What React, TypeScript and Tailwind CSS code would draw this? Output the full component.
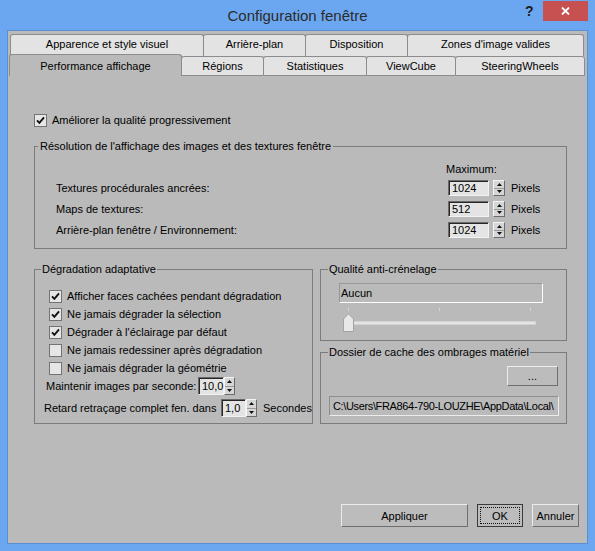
import React from "react";

function Check({ checked }: { checked: boolean }) {
  return (
    <span className="w-[13px] h-[13px] shrink-0 border border-[#737373] bg-[#e6e6e6] flex items-center justify-center">
      {checked && (
        <svg width="9" height="9" viewBox="0 0 9 9">
          <path d="M1 4.3 L3.4 6.8 L8 1.4" stroke="#111" strokeWidth="1.9" fill="none" />
        </svg>
      )}
    </span>
  );
}

function Spin({ className }: { className: string }) {
  return (
    <div
      className={
        "shrink-0 flex flex-col border border-t-[#f4f4f4] border-l-[#f4f4f4] border-b-[#6b6b6b] border-r-[#6b6b6b] bg-[#d6d6d6] " +
        className
      }
    >
      <div className="flex-1 flex items-center justify-center border-b border-b-[#9a9a9a]">
        <svg width="5" height="3" viewBox="0 0 5 3">
          <path d="M0 3 L2.5 0 L5 3 Z" fill="#111" />
        </svg>
      </div>
      <div className="flex-1 flex items-center justify-center">
        <svg width="5" height="3" viewBox="0 0 5 3">
          <path d="M0 0 L5 0 L2.5 3 Z" fill="#111" />
        </svg>
      </div>
    </div>
  );
}

function Field({ value, className }: { value: string; className: string }) {
  return (
    <div
      className={
        "shrink-0 bg-[#e4e4e4] border border-t-[#6a6a6a] border-l-[#6a6a6a] border-b-[#f2f2f2] border-r-[#f2f2f2] shadow-[inset_1px_1px_0_#262626] pl-[3px] flex items-center leading-none " +
        className
      }
    >
      {value}
    </div>
  );
}

function CheckRow({ checked, label }: { checked: boolean; label: string }) {
  return (
    <div className="h-[18px] flex items-center gap-[5px] pl-[14px]">
      <Check checked={checked} />
      <span>{label}</span>
    </div>
  );
}

export default function App() {
  return (
    <div className="w-[595px] h-[551px] bg-[#6ba7f0] flex flex-col font-['Liberation_Sans',Arial,sans-serif] text-[11px] leading-[14px] text-black overflow-hidden select-none">
      {/* Title bar */}
      <div className="relative h-[30px] shrink-0 flex items-center justify-center">
        <span className="text-[15px] leading-[18px] text-[#2b2b2b] mt-[2px]">Configuration fenêtre</span>
        <span className="absolute left-[525px] top-[3px] text-[14px] leading-[17px] font-bold text-[#1c1c1c]">?</span>
        <div className="absolute left-[543px] top-[1px] w-[45px] h-[20px] bg-[#c75050] flex items-center justify-center">
          <svg width="9" height="8" viewBox="0 0 9 8">
            <path d="M1 0.5 L8 7.5 M8 0.5 L1 7.5" stroke="#fff" strokeWidth="1.8" />
          </svg>
        </div>
      </div>

      {/* Client area */}
      <div className="mx-[7px] mb-[7px] flex-1 border border-[#5a8fd6] bg-[#bababa] flex flex-col">
        {/* Tabs row 1 */}
        <div className="pt-[3px] pl-[2px] flex h-[25px] shrink-0">
          <div className="w-[194px] h-[22px] border border-b-0 border-[#8c8c8c] bg-[#e3e3e3] rounded-t-[3px] flex justify-center pt-[2px]">
            Apparence et style visuel
          </div>
          <div className="-ml-px w-[103px] h-[22px] border border-b-0 border-[#8c8c8c] bg-[#e3e3e3] rounded-t-[3px] flex justify-center pt-[2px]">
            Arrière-plan
          </div>
          <div className="-ml-px w-[103px] h-[22px] border border-b-0 border-[#8c8c8c] bg-[#e3e3e3] rounded-t-[3px] flex justify-center pt-[2px]">
            Disposition
          </div>
          <div className="-ml-px w-[177px] h-[22px] border border-b-0 border-[#8c8c8c] bg-[#e3e3e3] rounded-t-[3px] flex justify-center pt-[2px]">
            Zones d'image valides
          </div>
        </div>
        {/* Tabs row 2 */}
        <div className="pl-[1px] flex h-[20px] shrink-0 items-end">
          <div className="relative z-10 -mt-[2px] w-[173px] h-[22px] border border-b-0 border-[#8c8c8c] bg-[#bababa] rounded-t-[3px] flex items-center justify-center">
            Performance affichage
          </div>
          <div className="-ml-px w-[83px] h-[20px] border border-[#8c8c8c] bg-[#e3e3e3] rounded-t-[3px] flex items-center justify-center">
            Régions
          </div>
          <div className="-ml-px w-[104px] h-[20px] border border-[#8c8c8c] bg-[#e3e3e3] rounded-t-[3px] flex items-center justify-center">
            Statistiques
          </div>
          <div className="-ml-px w-[90px] h-[20px] border border-[#8c8c8c] bg-[#e3e3e3] rounded-t-[3px] flex items-center justify-center">
            ViewCube
          </div>
          <div className="-ml-px w-[130px] h-[20px] border border-[#8c8c8c] bg-[#e3e3e3] rounded-t-[3px] flex items-center justify-center">
            SteeringWheels
          </div>
        </div>

        {/* Panel */}
        <div className="flex-1 flex flex-col">
          <div className="pl-[26px] pr-[20px] flex flex-col">
            <div className="mt-[37px] h-[14px] flex items-center gap-[5px]">
              <Check checked={true} />
              <span>Améliorer la qualité progressivement</span>
            </div>

            {/* Group 1 */}
            <fieldset className="mt-[12px] h-[110px] border border-[#7c7c7c]">
              <legend className="ml-[3px] px-[2px] leading-[14px]">
                Résolution de l'affichage des images et des textures fenêtre
              </legend>
              <div className="pl-[21px] flex flex-col">
                <div className="mt-[9px] h-[14px] pl-[390px]">Maximum:</div>
                <div className="mt-[4px] h-[16px] flex items-center">
                  <span className="w-[392px]">Textures procédurales ancrées:</span>
                  <Field value="1024" className="w-[41px] h-[16px]" />
                  <Spin className="ml-[4px] w-[12px] h-[16px]" />
                  <span className="ml-[6px]">Pixels</span>
                </div>
                <div className="mt-[5px] h-[16px] flex items-center">
                  <span className="w-[392px]">Maps de textures:</span>
                  <Field value="512" className="w-[41px] h-[16px]" />
                  <Spin className="ml-[4px] w-[12px] h-[16px]" />
                  <span className="ml-[6px]">Pixels</span>
                </div>
                <div className="mt-[5px] h-[16px] flex items-center">
                  <span className="w-[392px]">Arrière-plan fenêtre / Environnement:</span>
                  <Field value="1024" className="w-[41px] h-[16px]" />
                  <Spin className="ml-[4px] w-[12px] h-[16px]" />
                  <span className="ml-[6px]">Pixels</span>
                </div>
              </div>
            </fieldset>

            {/* Bottom groups */}
            <div className="mt-[13px] flex gap-[7px]">
              <fieldset className="w-[278px] h-[162px] shrink-0 border border-[#7c7c7c]">
                <legend className="ml-[6px] px-[1px] leading-[14px]">Dégradation adaptative</legend>
                <div className="mt-[11px] flex flex-col">
                  <CheckRow checked={true} label="Afficher faces cachées pendant dégradation" />
                  <CheckRow checked={true} label="Ne jamais dégrader la sélection" />
                  <CheckRow checked={true} label="Dégrader à l'éclairage par défaut" />
                  <CheckRow checked={false} label="Ne jamais redessiner après dégradation" />
                  <CheckRow checked={false} label="Ne jamais dégrader la géométrie" />
                  <div className="h-[18px] flex items-center pl-[11px]">
                    <span className="w-[152px] shrink-0 whitespace-nowrap">Maintenir images par seconde:</span>
                    <Field value="10,0" className="w-[26px] h-[18px] pl-[2px]" />
                    <Spin className="w-[11px] h-[18px]" />
                  </div>
                  <div className="mt-[4px] h-[18px] flex items-center pl-[9px]">
                    <span className="w-[177px] shrink-0 whitespace-nowrap">Retard retraçage complet fen. dans</span>
                    <Field value="1,0" className="w-[25px] h-[18px] pl-[2px]" />
                    <Spin className="w-[11px] h-[18px]" />
                    <span className="ml-[6px] whitespace-nowrap">Secondes</span>
                  </div>
                </div>
              </fieldset>

              <div className="w-[247px] shrink-0 flex flex-col">
                <fieldset className="h-[79px] border border-[#7c7c7c]">
                  <legend className="ml-[7px] px-[1px] leading-[14px]">Qualité anti-crénelage</legend>
                  <div className="flex flex-col">
                    <div className="mt-[7px] ml-[18px] w-[204px] h-[20px] border border-t-[#989898] border-l-[#989898] border-b-white border-r-white pl-[1px] flex items-center">
                      Aucun
                    </div>
                    <div className="relative mt-[5px] ml-[22px] w-[194px] h-[24px]">
                      <div className="absolute left-[5px] top-0 w-px h-[3px] bg-[#d6d6d6]" />
                      <div className="absolute left-[96px] top-0 w-px h-[3px] bg-[#d6d6d6]" />
                      <div className="absolute left-[187px] top-0 w-px h-[3px] bg-[#d6d6d6]" />
                      <div className="absolute left-[4px] right-[1px] top-[13px] h-[4px] bg-[#e4e4e4] border border-[#d2d2d2]" />
                      <svg className="absolute left-0 top-[5px]" width="11" height="19" viewBox="0 0 11 19">
                        <path d="M0.5 6 L5.5 0.7 L10.5 6 L10.5 18.5 L0.5 18.5 Z" fill="#e8e8e8" stroke="#a3a3a3" strokeWidth="1" />
                      </svg>
                    </div>
                  </div>
                </fieldset>
                <fieldset className="mt-[4px] h-[79px] border border-[#7c7c7c]">
                  <legend className="ml-[7px] px-[1px] leading-[14px]">Dossier de cache des ombrages matériel</legend>
                  <div className="flex flex-col">
                    <div className="mt-[7px] mr-[8px] self-end w-[51px] h-[20px] bg-[#bcbcbc] border border-t-[#ececec] border-l-[#ececec] border-b-[#6e6e6e] border-r-[#6e6e6e] flex items-center justify-center">
                      ...
                    </div>
                    <div className="mt-[10px] ml-[8px] w-[230px] h-[20px] border border-t-[#8e8e8e] border-l-[#8e8e8e] border-b-[#ececec] border-r-[#ececec] pl-[3px] flex items-center overflow-hidden whitespace-nowrap tracking-[-0.35px]">
                      C:\Users\FRA864-790-LOUZHE\AppData\Local\
                    </div>
                  </div>
                </fieldset>
              </div>
            </div>
          </div>

          {/* Buttons */}
          <div className="mt-auto pr-[8px] pb-[16px] flex justify-end gap-[9px]">
            <div className="w-[127px] h-[23px] bg-[#bcbcbc] border border-t-[#ececec] border-l-[#ececec] border-b-[#6e6e6e] border-r-[#6e6e6e] flex items-center justify-center">
              Appliquer
            </div>
            <div className="w-[46px] h-[23px] bg-[#bcbcbc] border border-[#3a3a3a] p-[2px]">
              <div className="w-full h-full border border-dotted border-[#111] flex items-center justify-center">OK</div>
            </div>
            <div className="w-[47px] h-[23px] bg-[#bcbcbc] border border-t-[#ececec] border-l-[#ececec] border-b-[#6e6e6e] border-r-[#6e6e6e] flex items-center justify-center">
              Annuler
            </div>
          </div>
        </div>
      </div>
    </div>
  );
}
